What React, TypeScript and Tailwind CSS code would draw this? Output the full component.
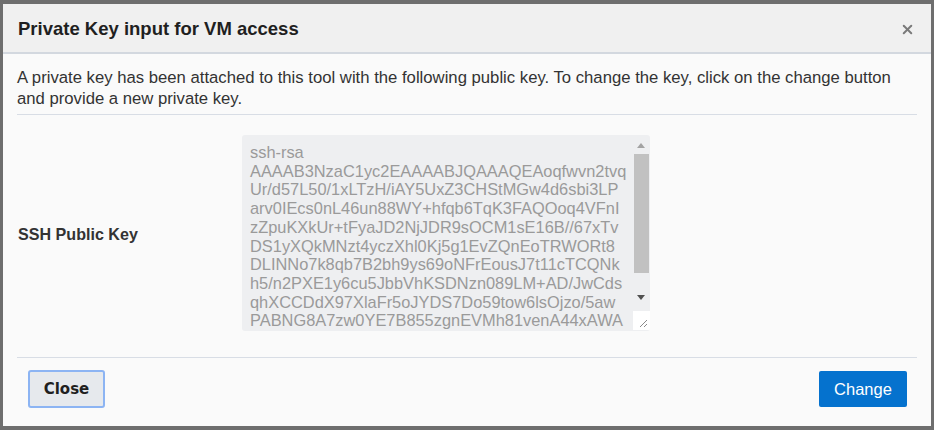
import { X } from 'lucide-react';

const keyLines = [
  'ssh-rsa',
  'AAAAB3NzaC1yc2EAAAABJQAAAQEAoqfwvn2tvq',
  'Ur/d57L50/1xLTzH/iAY5UxZ3CHStMGw4d6sbi3LP',
  'arv0IEcs0nL46un88WY+hfqb6TqK3FAQOoq4VFnI',
  'zZpuKXkUr+tFyaJD2NjJDR9sOCM1sE16B//67xTv',
  'DS1yXQkMNzt4yczXhl0Kj5g1EvZQnEoTRWORt8',
  'DLINNo7k8qb7B2bh9ys69oNFrEousJ7t11cTCQNk',
  'h5/n2PXE1y6cu5JbbVhKSDNzn089LM+AD/JwCds',
  'qhXCCDdX97XlaFr5oJYDS7Do59tow6lsOjzo/5aw',
  'PABNG8A7zw0YE7B855zgnEVMh81venA44xAWA',
];

export default function App() {
  return (
    <div className="w-[934px] h-[430px] bg-[#6e6e6e] pt-[4px] pl-[3px] pr-[3px] pb-[4px] overflow-hidden font-['Liberation_Sans',Arial,sans-serif]">
      <div className="h-full bg-[#fafafa] flex flex-col">
        {/* header */}
        <div className="h-[50px] shrink-0 bg-[#f0f0f0] border-b-2 border-[#d3d8df] flex items-center justify-between pl-[15px] pr-[16px]">
          <h1 className="text-[18.5px] font-bold text-[#1f1f1f] pt-[2px]">Private Key input for VM access</h1>
          <X className="w-[15px] h-[15px] text-[#7a7a7a] mt-[2px]" strokeWidth={3.2} />
        </div>

        {/* body */}
        <div className="px-[14px] flex-1 flex flex-col">
          <p className="text-[16.7px] leading-[21px] text-[#333] pt-[13px] pb-[5px] border-b border-[#d8dde5] whitespace-nowrap">
            A private key has been attached to this tool with the following public key. To change the key, click on the change button
            <br />
            and provide a new private key.
          </p>

          <div className="flex items-center pt-[20px] pb-[26px] border-b border-[#d8dde5]">
            <div className="w-[225px] text-[16.1px] font-bold text-[#333] pl-[1px] pt-[2px]">SSH Public Key</div>
            <div className="w-[408px] h-[196px] bg-[#eeeff1] rounded-[3px] flex relative overflow-hidden">
              <div className="flex-1 pl-[8px] pt-[8px] text-[16.4px] leading-[18.7px] text-[#9a9a9a] overflow-hidden">
                {keyLines.map((line) => (
                  <div key={line} className="whitespace-nowrap">{line}</div>
                ))}
              </div>
              <div className="w-[18px] flex flex-col items-center pt-[5px] pb-[1px]">
                <svg width="8" height="5" viewBox="0 0 8 5" className="mb-[6px] mt-[3px]">
                  <path d="M0 5 L4 0 L8 5 Z" fill="#a3a3a3" />
                </svg>
                <div className="w-[15px] h-[119px] bg-[#c1c1c1]" />
                <div className="flex-1" />
                <svg width="8" height="5" viewBox="0 0 8 5" className="mb-[11px]">
                  <path d="M0 0 L4 5 L8 0 Z" fill="#505050" />
                </svg>
                <div className="w-[17px] h-[19px] bg-white relative">
                  <svg width="9" height="9" viewBox="0 0 9 9" className="absolute right-[2px] bottom-[2px]">
                    <path d="M8 1 L1 8 M8 5 L5 8" stroke="#8a8a8a" strokeWidth="1" />
                  </svg>
                </div>
              </div>
            </div>
          </div>

          <div className="flex items-center justify-between pt-[12px] pl-[11px] pr-[10px]">
            <button className="w-[77px] h-[38px] bg-[#e6e9ed] border-2 border-[#8cb4f3] rounded-[3px] text-[15px] font-bold text-[#1f1f1f] font-['DejaVu_Sans',sans-serif]">
              Close
            </button>
            <button className="w-[88px] h-[36px] bg-[#0572ce] rounded-[2px] text-[16.5px] text-white">
              Change
            </button>
          </div>
        </div>
      </div>
    </div>
  );
}
